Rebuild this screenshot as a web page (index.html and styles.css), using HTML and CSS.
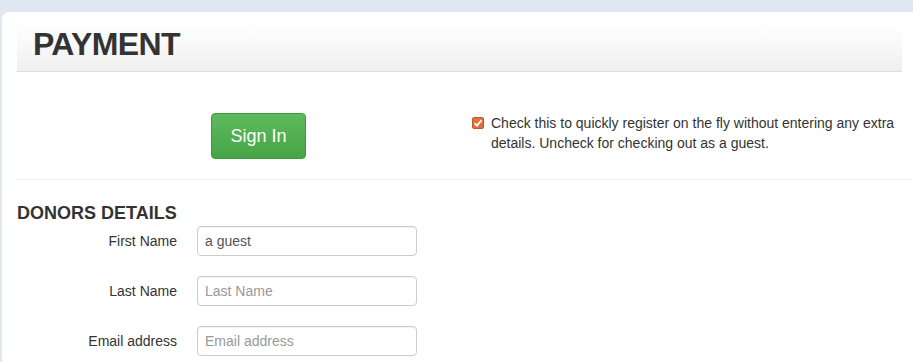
FILE: index.html
```html
<!DOCTYPE html>
<html lang="en">
<head>
    <meta charset="UTF-8">
    <title>Payment</title>
    <link rel="stylesheet" href="styles.css">
</head>
<body>

<div class="panel">
    <div class="judul-box">
        <h1>PAYMENT</h1>
    </div>

    <!-- SIGN IN / REGISTER -->
    <div class="signin-row">
        <div class="signin-col">
            <button class="btn-signin">Sign In</button>
        </div>
        <div class="register-col">
            <label class="check-label">
                <span class="check-box">
                    <svg width="10" height="10" viewBox="0 0 10 10"><path d="M1.5 5.2 L4 7.6 L8.6 2.2" fill="none" stroke="#fff" stroke-width="1.8"/></svg>
                </span>
                <span>Check this to quickly register on the fly without entering any extra details. Uncheck for checking out as a guest.</span>
            </label>
        </div>
    </div>

    <!-- DONOR -->
    <h4 class="section-title">DONORS DETAILS</h4>
    <div class="form-group">
        <label>First Name</label>
        <input type="text" value="a guest">
    </div>
    <div class="form-group">
        <label>Last Name</label>
        <input type="text" placeholder="Last Name">
    </div>
    <div class="form-group">
        <label>Email address</label>
        <input type="text" placeholder="Email address">
    </div>
</div>

</body>
</html>
```

FILE: styles.css
```css
body {
    margin: 0;
    font-family: "Liberation Sans", Arial, sans-serif;
    font-size: 14px;
    color: #333;
    background-color: #dfe8f0;
    overflow: hidden;
}

.panel {
    margin: 12px 0 0 2px;
    background-color: #fff;
    border-radius: 7px 0 0 0;
    padding: 12px 11px 20px 15px;
    min-height: 400px;
}

.judul-box {
    height: 47px;
    padding-left: 16px;
    background: linear-gradient(to bottom, #fff 0%, #f9f9f9 40%, #efefef 100%);
    border-bottom: 1px solid #dedede;
}

.judul-box h1 {
    margin: 0;
    font-size: 32px;
    letter-spacing: -0.6px;
    line-height: 38px;
    padding-top: 1px;
    font-weight: bold;
    color: #333;
}

.signin-row {
    display: flex;
    margin-top: 41px;
    margin-right: -11px;
    padding-bottom: 20px;
    border-bottom: 1px solid #eee;
}

.signin-col {
    width: 455px;
    display: flex;
    justify-content: center;
    padding-left: 28px;
    box-sizing: border-box;
}

.btn-signin {
    font-family: "Liberation Sans", Arial, sans-serif;
    font-size: 18px;
    color: #fff;
    padding: 0 18px;
    height: 46px;
    border: 1px solid #3d9a3d;
    border-radius: 4px;
    background: linear-gradient(to bottom, #5dba5d 0%, #46a546 100%);
    cursor: pointer;
}

.register-col {
    flex: 1;
    padding-right: 11px;
}

.check-label {
    display: flex;
    align-items: flex-start;
    line-height: 20px;
}

.check-box {
    flex: none;
    width: 12px;
    height: 12px;
    margin: 4px 7px 0 0;
    background: #e0703e;
    border: 1px solid #c25a2c;
    border-radius: 2px;
    display: flex;
    align-items: center;
    justify-content: center;
    box-sizing: border-box;
}

.section-title {
    margin: 23px 0 3px 0;
    font-size: 18px;
    font-weight: bold;
    line-height: 20px;
    color: #333;
}

.form-group {
    display: flex;
    align-items: center;
    margin-bottom: 20px;
}

.form-group label {
    width: 160px;
    text-align: right;
    padding-right: 20px;
}

.form-group input {
    width: 220px;
    height: 30px;
    box-sizing: border-box;
    padding: 0 7px;
    font-family: "Liberation Sans", Arial, sans-serif;
    font-size: 14px;
    color: #555;
    border: 1px solid #ccc;
    border-radius: 4px;
    box-shadow: inset 0 1px 1px rgba(0, 0, 0, 0.06);
}

.form-group input::placeholder {
    color: #999;
}
```
